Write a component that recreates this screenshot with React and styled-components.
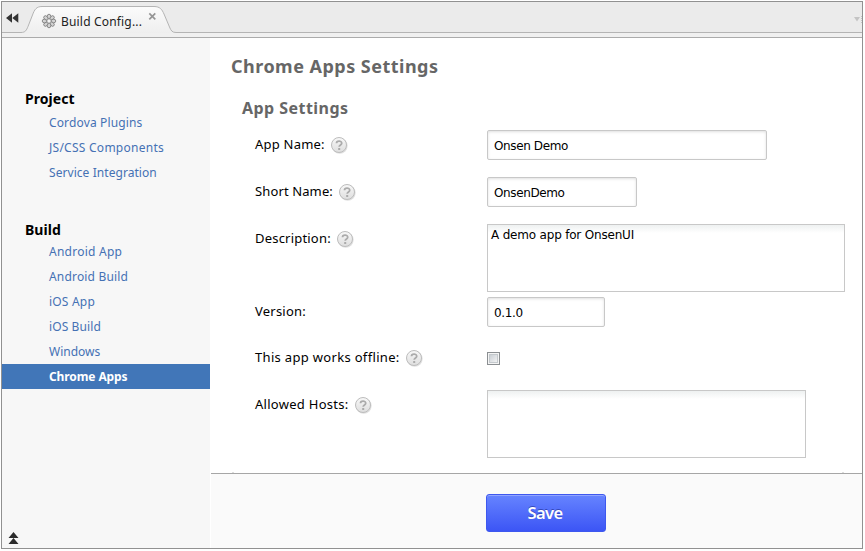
import React from 'react';
import styled, { createGlobalStyle } from 'styled-components';

const Global = createGlobalStyle`
  *, *::before, *::after { box-sizing: border-box; }
  body { margin: 0; background: #fff; color: #000; font-family: "Noto Sans", "Open Sans", sans-serif; }
`;

const Window = styled.div`
  display: flex;
  flex-direction: column;
  width: 862px;
  height: 548px;
  margin: 1px 0 0 1px;
  border: 1px solid #919191;
  background: #fff;
`;

const TabBar = styled.header`
  position: relative;
  display: flex;
  flex: none;
  height: 36px;
  background: #ebebeb;
`;

const TabOutline = styled.svg`
  position: absolute;
  inset: 0;
`;

const CollapseButton = styled.button`
  position: relative;
  display: flex;
  align-items: center;
  width: 39px;
  height: 31px;
  padding: 1px 0 0 4px;
  border: 0;
  background: none;
`;

const Tab = styled.div`
  position: relative;
  display: flex;
  align-items: center;
  height: 31px;
  padding-top: 7px;
`;

const TabLabel = styled.span`
  width: 84px;
  margin: 2px 0 0 4px;
  color: #222;
  font-size: 12px;
  line-height: 20px;
  letter-spacing: 0.18px;
  white-space: nowrap;
`;

const TabClose = styled.svg`
  margin: -9px 0 0 3px;
`;

const TabMenu = styled.svg`
  position: relative;
  margin: 14px 0 0 auto;
`;

const Body = styled.div`
  display: flex;
  flex: 1;
  min-height: 0;
`;

const Sidebar = styled.nav`
  display: flex;
  flex-direction: column;
  flex: none;
  width: 208px;
  padding: 50px 0 4px;
  background: #f7f7f7;
`;

const NavGroup = styled.section`
  margin-bottom: ${(p) => p.$gap}px;
`;

const NavHeading = styled.h2`
  margin: 0;
  padding-left: 23px;
  font-size: 14px;
  font-weight: 700;
  line-height: ${(p) => p.$height}px;
  letter-spacing: 0.05px;
`;

const NavLink = styled.a`
  display: block;
  padding-left: 47px;
  font-size: 12px;
  line-height: 25px;
  letter-spacing: ${(p) => p.$spacing}px;
  font-weight: ${(p) => (p.$active ? 700 : 400)};
  color: ${(p) => (p.$active ? '#fff' : '#4571b4')};
  background: ${(p) => (p.$active ? '#4176b8' : 'transparent')};
`;

const ScrollTop = styled.svg`
  flex: none;
  margin: auto 0 0 6px;
`;

const Main = styled.main`
  display: flex;
  flex-direction: column;
  flex: 1;
  padding-left: 1px;
`;

const Content = styled.div`
  display: flex;
  flex-direction: column;
  flex: 1;
  padding: 15px 0 0 20px;
`;

const Title = styled.h1`
  margin: 0;
  color: #666;
  font-size: 18px;
  line-height: 26px;
  letter-spacing: 0.48px;
`;

const Subtitle = styled.h2`
  margin: 17px 0 10px 11px;
  color: #666;
  font-size: 16px;
  line-height: 24px;
  letter-spacing: 0.45px;
`;

const Row = styled.div`
  display: grid;
  grid-template-columns: 232px 1fr;
  align-items: start;
  height: ${(p) => p.$height}px;
  margin-left: 24px;
`;

const Label = styled.label`
  display: flex;
  align-items: center;
  gap: 5px;
  font-size: 13px;
  line-height: 28px;
  letter-spacing: ${(p) => p.$spacing}px;
`;

const HelpIcon = styled.svg`
  margin-top: 1px;
`;

const TextField = styled.input`
  width: ${(p) => p.$width}px;
  height: 30px;
  padding: 2px 6px 0;
  border: 1px solid #c8c8c8;
  border-radius: 2px;
  outline: 0;
  background: #fff;
  box-shadow: inset 0 1px 3px rgba(0, 0, 0, 0.13);
  color: #000;
  font: 12px "DejaVu Sans", sans-serif;
  letter-spacing: -0.38px;
`;

const TextArea = styled.textarea`
  display: block;
  width: ${(p) => p.$width}px;
  height: 68px;
  padding: 2px 3px;
  border: 1px solid #c8c8c8;
  border-radius: 0;
  outline: 0;
  resize: none;
  background: linear-gradient(#eef1f1, #fff 8px);
  color: #000;
  font: 12px/16px "DejaVu Sans", sans-serif;
  letter-spacing: -0.19px;
`;

const Checkbox = styled.input.attrs({ type: 'checkbox' })`
  appearance: none;
  width: 13px;
  height: 13px;
  margin: 9px 0 0;
  padding: 1px;
  border: 1px solid #8b8f92;
  background: linear-gradient(135deg, #c5cbd1, #f7f7f7) content-box, #f4f4f4;
  box-shadow: inset 0 0 0 1px #f4f4f4, inset 0 0 0 2px #c4c9cd;
`;

const SectionEnds = styled.div`
  height: 1px;
  margin: auto 18px 0 1px;
  border: solid #ddd;
  border-width: 0 2px;
`;

const Footer = styled.footer`
  flex: none;
  height: 75px;
  padding: 20px 0 0 275px;
  border-top: 1px solid #a6a6a6;
  background: #fafafa;
`;

const SaveButton = styled.button`
  display: block;
  width: 120px;
  height: 38px;
  padding: 0 2px 0 0;
  border: 1px solid #3e58ef;
  border-radius: 3px;
  background: linear-gradient(#6684ff, #3c55f5);
  box-shadow: inset 0 1px 0 #90a5ff;
  color: #fff;
  font: 600 16.5px/36px "Noto Sans", sans-serif;
  letter-spacing: -0.65px;
  text-shadow: 0 -1px 0 rgba(20, 30, 120, 0.5);
`;

function Help() {
  return (
    <HelpIcon width="18" height="18" viewBox="0 0 18 18" aria-hidden="true">
      <defs>
        <linearGradient id="help" x2="0" y2="1">
          <stop stopColor="#f8f8f8" />
          <stop offset="1" stopColor="#dedede" />
        </linearGradient>
      </defs>
      <circle cx="9.7" cy="9.8" r="8" fill="#000" opacity="0.12" />
      <circle cx="9" cy="9" r="7.5" fill="url(#help)" stroke="#bdbdbd" />
      <path d="M6.5 7.3C6.5 4.4 11.7 4.4 11.7 7.2C11.7 9 9.2 8.8 9.2 10.8" fill="none" stroke="#ababab" strokeWidth="1.8" />
      <rect x="8.2" y="12" width="2" height="2" fill="#ababab" />
    </HelpIcon>
  );
}

const petals = [0, 45, 90, 135, 180, 225, 270, 315];

function Gear() {
  return (
    <svg width="16" height="16" viewBox="0 0 16 16" aria-hidden="true">
      {petals.map((angle) => (
        <ellipse
          key={angle}
          cx="8"
          cy="3.6"
          rx="1.8"
          ry="2.4"
          fill="#d2d2d2"
          stroke="#808080"
          strokeWidth="0.9"
          transform={`rotate(${angle} 8 8)`}
        />
      ))}
      <circle cx="8" cy="8" r="2.2" fill="#f5f5f5" stroke="#8c8c8c" strokeWidth="0.9" />
    </svg>
  );
}

const groups = [
  {
    title: 'Project',
    height: 22,
    gap: 36,
    links: [['Cordova Plugins', 0.14], ['JS/CSS Components', 0.26], ['Service Integration', 0.06]],
  },
  {
    title: 'Build',
    height: 18,
    gap: 0,
    links: [
      ['Android App', 0.25], ['Android Build', 0.18], ['iOS App', 0.2],
      ['iOS Build', 0.1], ['Windows', 0], ['Chrome Apps', -0.1],
    ],
  },
];

const fields = [
  { label: 'App Name:', spacing: 0.22, help: true, height: 47, control: <TextField $width={280} defaultValue="Onsen Demo" /> },
  { label: 'Short Name:', spacing: 0.12, help: true, height: 47, control: <TextField $width={150} defaultValue="OnsenDemo" /> },
  { label: 'Description:', spacing: 0.2, help: true, height: 73, control: <TextArea $width={358} defaultValue="A demo app for OnsenUI" /> },
  { label: 'Version:', spacing: 0.22, height: 46, control: <TextField $width={118} defaultValue="0.1.0" /> },
  { label: 'This app works offline:', spacing: 0.32, help: true, height: 47, control: <Checkbox /> },
  { label: 'Allowed Hosts:', spacing: 0.28, help: true, height: 68, control: <TextArea $width={319} /> },
];

export default function App() {
  return (
    <>
      <Global />
      <Window>
        <TabBar>
          <TabOutline width="860" height="36" viewBox="0 0 860 36">
            <defs>
              <linearGradient id="tab" x2="0" y2="1">
                <stop stopColor="#fbfbfb" />
                <stop offset="1" stopColor="#efefef" />
              </linearGradient>
            </defs>
            <rect y="30" width="860" height="5" fill="#f0f0f0" />
            <path d="M0 0H860V30.5H0Z" fill="#ebebeb" />
            <path
              d="M0 30.5H19C23.5 30.5 24.5 28 26 24.5L30.5 13C32.5 7.5 34.5 4.5 40 4.5H152C158 4.5 160 7.5 162 12L167.5 25C169 28.5 170 30.5 174 30.5H860"
              fill="url(#tab)"
              stroke="#b4b4b4"
            />
            <path d="M0 35.5H860" stroke="#ababab" />
          </TabOutline>
          <CollapseButton aria-label="Collapse sidebar">
            <svg width="13" height="10" viewBox="0 0 13 10">
              <path d="M6 .3V9.7L0 5ZM12.3 .3V9.7L6.3 5Z" fill="#333" />
            </svg>
          </CollapseButton>
          <Tab>
            <Gear />
            <TabLabel>Build Config...</TabLabel>
            <TabClose width="9" height="9" viewBox="0 0 9 9">
              <path d="M1.3 1.3L7.3 7.3M7.3 1.3L1.3 7.3" stroke="#969696" strokeWidth="1.7" />
            </TabClose>
          </Tab>
          <TabMenu width="9" height="9" viewBox="0 0 9 9">
            <path d="M1 1H7L4 5.5Z" fill="#c4c4c4" />
            <path d="M8.5 0V8" stroke="#c4c4c4" strokeDasharray="1 1" />
          </TabMenu>
        </TabBar>
        <Body>
          <Sidebar>
            {groups.map((group) => (
              <NavGroup key={group.title} $gap={group.gap}>
                <NavHeading $height={group.height}>{group.title}</NavHeading>
                {group.links.map(([name, spacing]) => (
                  <NavLink key={name} $spacing={spacing} $active={name === 'Chrome Apps'}>{name}</NavLink>
                ))}
              </NavGroup>
            ))}
            <ScrollTop width="11" height="12" viewBox="0 0 11 12">
              <path d="M5.5 0L10.5 6H.5ZM5.5 6L10.5 12H.5Z" fill="#2c2c2c" />
            </ScrollTop>
          </Sidebar>
          <Main>
            <Content>
              <Title>Chrome Apps Settings</Title>
              <Subtitle>App Settings</Subtitle>
              {fields.map((field) => (
                <Row key={field.label} $height={field.height}>
                  <Label $spacing={field.spacing}>
                    {field.label}
                    {field.help && <Help />}
                  </Label>
                  {field.control}
                </Row>
              ))}
              <SectionEnds />
            </Content>
            <Footer>
              <SaveButton>Save</SaveButton>
            </Footer>
          </Main>
        </Body>
      </Window>
    </>
  );
}
